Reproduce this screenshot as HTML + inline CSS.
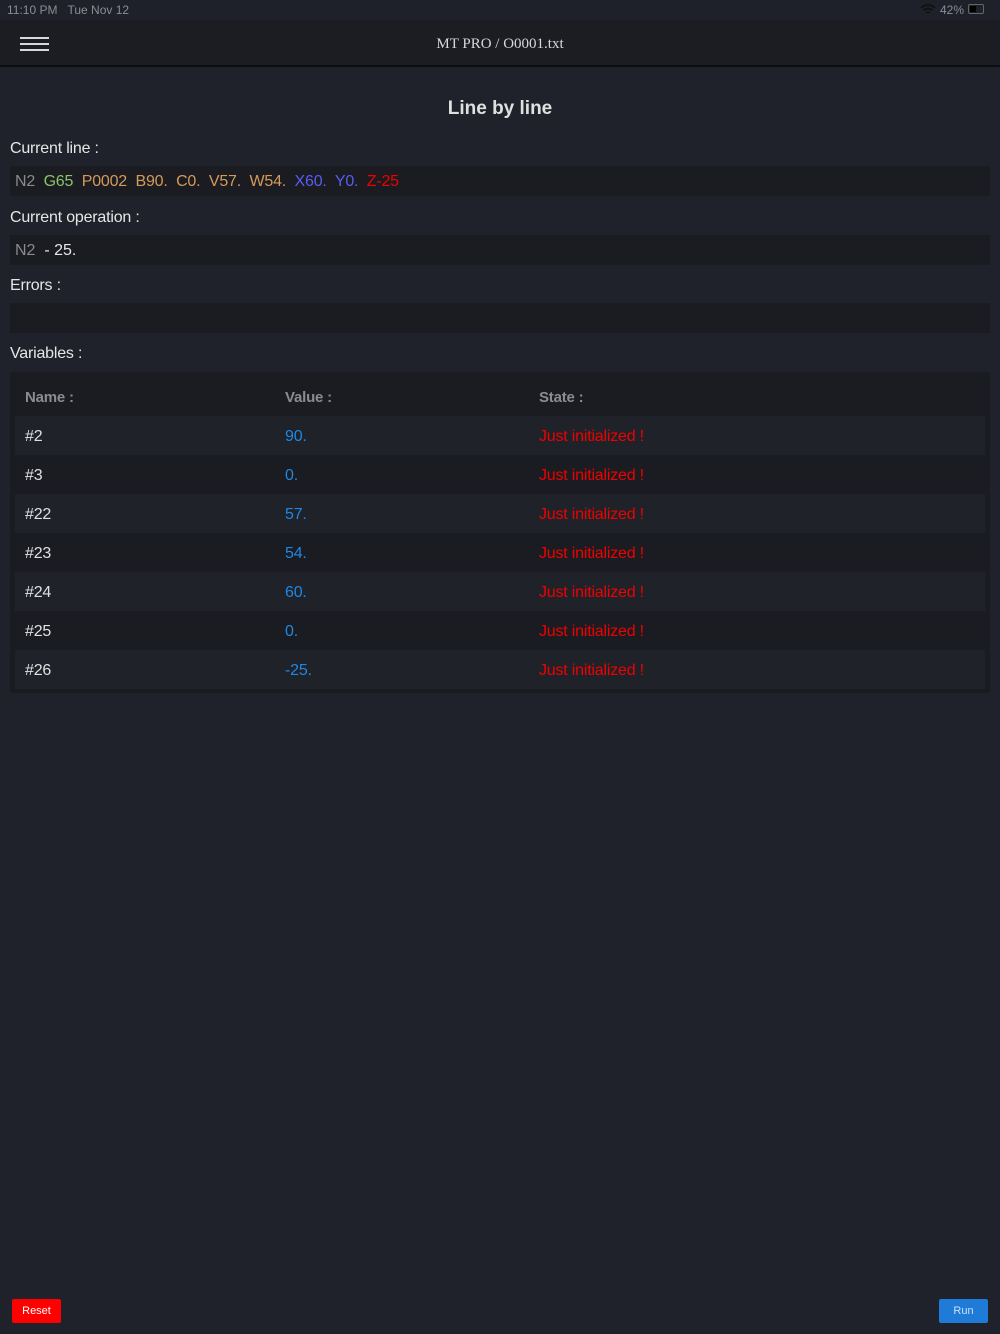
<!DOCTYPE html>
<html><head><meta charset="utf-8"><style>
*{margin:0;padding:0;box-sizing:border-box}
body{width:1000px;height:1334px;background:#1f222a;font-family:"Liberation Sans",Arial,sans-serif;color:#e6e6e6;position:relative;overflow:hidden}
.abs{position:absolute}
.status{top:0;left:0;width:1000px;height:20px;font-size:12px;color:#8a8d94;background:#1e2129}
.hdr{top:20px;left:0;width:1000px;height:47px;background:#1b1d23;border-bottom:2px solid #0d0e11}
.hl{position:absolute;left:20px;width:29px;height:2px;background:#d8d8d8}
.title{top:36px;left:0;width:1000px;text-align:center;font-family:"Liberation Serif",serif;font-size:15px;color:#d8d8d8}
.h1{top:98px;width:1000px;text-align:center;font-size:19px;font-weight:bold;color:#e0e0e0}
.lbl{left:10px;font-size:16px;color:#e6e6e6;letter-spacing:-0.2px}
.box{left:10px;width:980px;height:30px;background:#1a1c21;font-size:16px;line-height:32px;padding-left:5px;white-space:pre}
.tbl{left:10px;top:372px;width:980px;height:321px;background:#1a1c21}
.row{position:absolute;left:5px;width:970px;height:39px;font-size:16px;line-height:41px;letter-spacing:-0.2px}
.row.a{background:#1f2229}
.c1{position:absolute;left:10px;color:#e0e0e0}
.c2{position:absolute;left:270px;color:#1e88e5}
.c3{position:absolute;left:524px;color:#f00000}
.th{color:#8a8c90;font-weight:bold;font-size:15px}
.btn{font-size:11px;color:#fff;text-align:center;line-height:24px;height:24px;border-radius:2px}
</style></head><body>
<div class="abs status"><span style="position:absolute;left:7px;top:3px">11:10 PM&nbsp;&nbsp;&nbsp;Tue Nov 12</span><span style="position:absolute;left:940px;top:3px">42%</span><span style="position:absolute;left:968px;top:4px;width:16px;height:10px;border:1px solid #666;border-radius:2px"><span style="position:absolute;left:1px;top:1px;width:6px;height:6px;background:#000"></span></span>
<svg style="position:absolute;left:920px;top:4px" width="16" height="11" viewBox="0 0 16 11"><path d="M1 4a10 10 0 0 1 14 0M3.5 6.5a6.5 6.5 0 0 1 9 0M6 9a3 3 0 0 1 4 0" stroke="#111" stroke-width="1.8" fill="none"/></svg></div>
<div class="abs hdr"><div class="hl" style="top:17px"></div><div class="hl" style="top:23px"></div><div class="hl" style="top:29px"></div></div>
<div class="abs title">MT PRO / O0001.txt</div>
<div class="abs h1">Line by line</div>
<div class="abs lbl" style="top:140px">Current line :</div>
<div class="abs box" style="top:166px;letter-spacing:-0.2px"><span style="color:#8a8a8a">N2</span>  <span style="color:#8bc26a">G65</span>  <span style="color:#d49a5a">P0002  B90.  C0.  V57.  W54.</span>  <span style="color:#5a5cf0">X60.  Y0.</span>  <span style="color:#f00000">Z-25</span></div>
<div class="abs lbl" style="top:209px">Current operation :</div>
<div class="abs box" style="top:235px"><span style="color:#8a8a8a">N2</span>  - 25.</div>
<div class="abs lbl" style="top:277px">Errors :</div>
<div class="abs box" style="top:303px"></div>
<div class="abs lbl" style="top:345px">Variables :</div>
<div class="abs tbl">
<div class="row th" style="top:5px"><span class="c1" style="color:#8a8c90">Name :</span><span class="c2" style="color:#8a8c90">Value :</span><span class="c3" style="color:#8a8c90">State :</span></div>
<div class="row a" style="top:44px"><span class="c1">#2</span><span class="c2">90.</span><span class="c3">Just initialized !</span></div>
<div class="row" style="top:83px"><span class="c1">#3</span><span class="c2">0.</span><span class="c3">Just initialized !</span></div>
<div class="row a" style="top:122px"><span class="c1">#22</span><span class="c2">57.</span><span class="c3">Just initialized !</span></div>
<div class="row" style="top:161px"><span class="c1">#23</span><span class="c2">54.</span><span class="c3">Just initialized !</span></div>
<div class="row a" style="top:200px"><span class="c1">#24</span><span class="c2">60.</span><span class="c3">Just initialized !</span></div>
<div class="row" style="top:239px"><span class="c1">#25</span><span class="c2">0.</span><span class="c3">Just initialized !</span></div>
<div class="row a" style="top:278px"><span class="c1">#26</span><span class="c2">-25.</span><span class="c3">Just initialized !</span></div>
</div>
<div class="abs btn" style="left:12px;top:1299px;width:49px;background:#ff0000">Reset</div>
<div class="abs btn" style="left:939px;top:1299px;width:49px;background:#1e7bd8;color:#cfe0f5">Run</div>
</body></html>
